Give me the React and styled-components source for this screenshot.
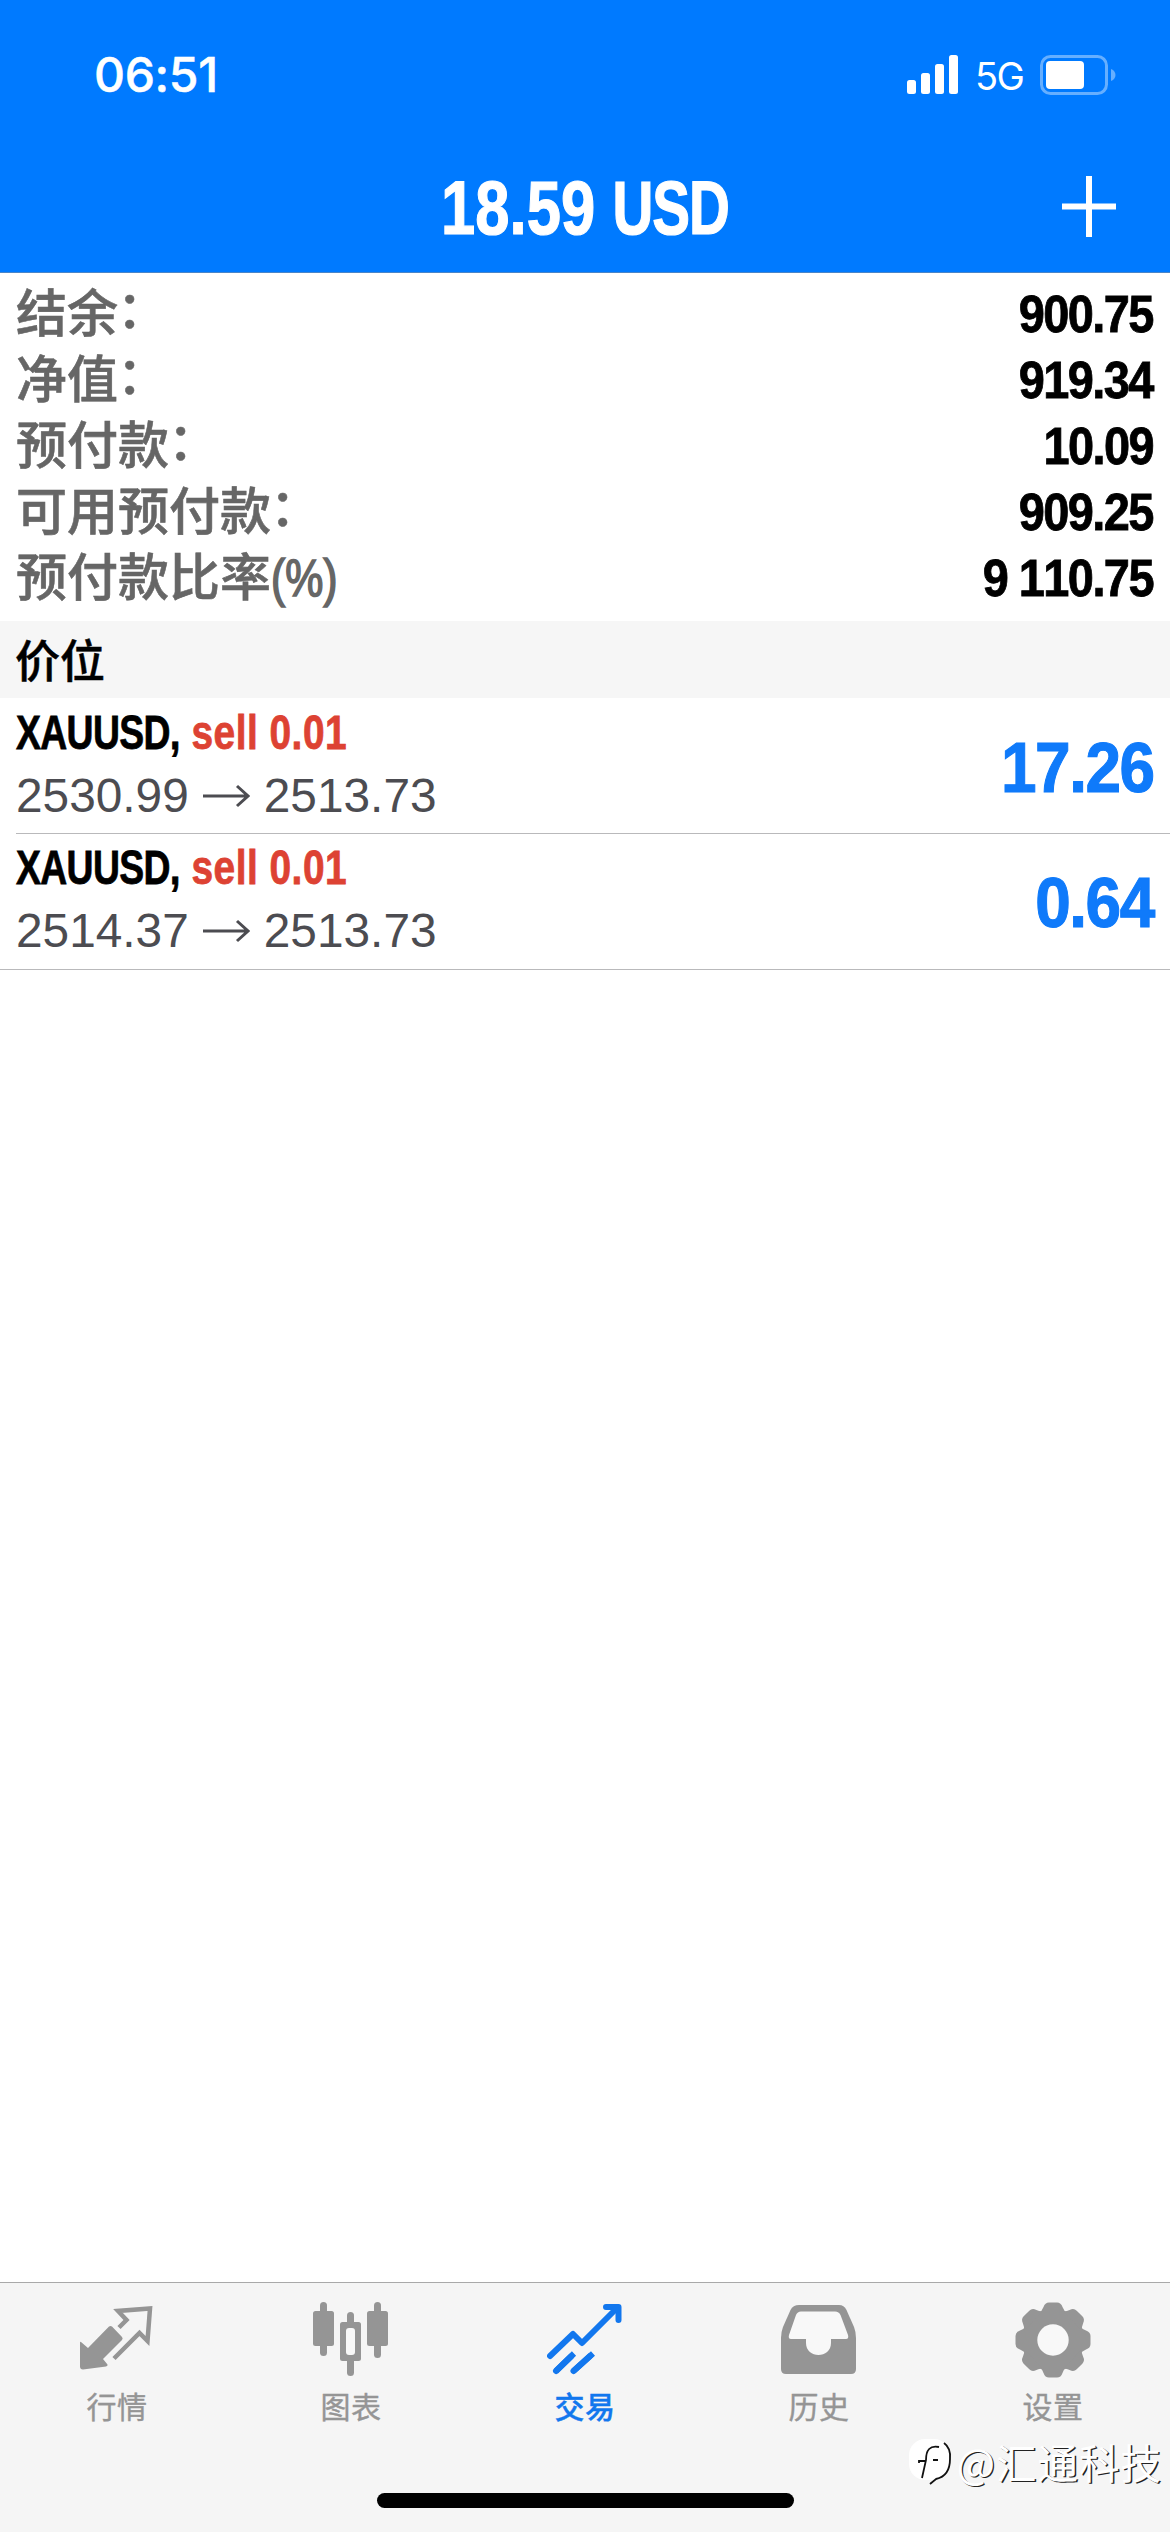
import React from 'react';
import styled, { createGlobalStyle } from 'styled-components';

const GlobalStyle = createGlobalStyle`
    * {
        box-sizing: border-box;
    }
    body {
        margin: 0;
        background: #ffffff;
        font-family: "Liberation Sans", "Noto Sans CJK SC", sans-serif;
    }
`;

const Screen = styled.div`
    position: relative;
    width: 1170px;
    height: 2532px;
    display: flex;
    flex-direction: column;
    overflow: hidden;
    background: #ffffff;
`;

const Header = styled.header`
    height: 273px;
    background: #007aff;
    border-bottom: 1px solid #4a85c8;
    color: #ffffff;
`;

const StatusBar = styled.div`
    height: 140px;
    padding: 25px 54px 15px 94px;
    display: flex;
    align-items: center;
    justify-content: space-between;
`;

const Time = styled.div`
    font: 500 48px/60px Inter, sans-serif;
    letter-spacing: -0.3px;
    -webkit-text-stroke: 0.5px currentColor;
`;

const StatusIcons = styled.div`
    display: flex;
    align-items: center;
`;

const Network = styled.span`
    width: 49px;
    margin: 2px 16px 0 16px;
    font: 400 38px/48px Inter, sans-serif;
    letter-spacing: -1.5px;
    white-space: nowrap;
`;

const TitleBar = styled.div`
    height: 132px;
    padding: 0 54px;
    display: grid;
    grid-template-columns: 54px 1fr 54px;
    align-items: center;
`;

// Bold text squeezed to condensed proportions
const Condensed = styled.span`
    display: block;
    font-weight: 700;
    font-size: ${p => p.$size}px;
    font-kerning: none;
    line-height: ${p => p.$line}px;
    letter-spacing: ${p => p.$spacing || 0}px;
    color: ${p => p.$color || '#000000'};
    transform: scaleX(${p => p.$scale});
    transform-origin: ${p => p.$origin || 'right'} center;
    -webkit-text-stroke: 0.016em currentColor;
    white-space: nowrap;
`;

const Title = styled(Condensed)`
    grid-column: 2;
    text-align: center;
    padding-top: 3px;
`;

// Capitals are narrower than the digits beside them
const Caps = styled.span`
    display: inline-block;
    margin-right: -${p => p.$pull}px;
    letter-spacing: ${p => p.$spacing}px;
    transform: scaleX(${p => p.$scale});
    transform-origin: left center;
`;

const Summary = styled.section`
    height: 348px;
    padding: 9px 17px 0 16px;
`;

const SummaryRow = styled.div`
    height: 66px;
    display: flex;
    align-items: center;
    justify-content: space-between;
`;

const Label = styled.span`
    font-size: 51px;
    font-weight: 500;
    line-height: 66px;
    color: #666666;
    -webkit-text-stroke: 0.6px currentColor;
    white-space: nowrap;
`;

const Colon = styled.span`
    position: relative;
    top: -4px;
    left: -1px;
`;

const Unit = styled.span`
    display: inline-block;
    transform: scaleX(0.84);
    transform-origin: left center;
    -webkit-text-stroke: 1.6px currentColor;
`;

const SectionTitle = styled.h2`
    height: 77px;
    margin: 0;
    padding-left: 15px;
    background: #f6f6f6;
    font: 500 45px/75px "Noto Sans CJK SC", sans-serif;
    color: #000000;
    -webkit-text-stroke: 0.5px currentColor;
`;

const Positions = styled.section`
    flex: 1;
`;

const PositionRow = styled.div`
    height: 136px;
    margin-left: ${p => (p.$last ? 0 : 16)}px;
    padding: ${p => (p.$last ? 7 : 8)}px 16px 0 ${p => (p.$last ? 16 : 0)}px;
    display: flex;
    justify-content: space-between;
    border-bottom: 1px solid #b9b9bb;
`;

const Side = styled.b`
    color: #dd4233;
    letter-spacing: 0.6px;
`;

const Prices = styled.div`
    display: flex;
    align-items: center;
    font-size: 47.8px;
    line-height: 56px;
    padding-top: 8px;
    color: #4c4c51;
`;

const Arrow = styled.svg`
    margin: 0 14px 0 13px;
`;

const Profit = styled.div`
    padding-top: 22px;
`;

const TabBar = styled.nav`
    height: 250px;
    display: flex;
    flex-direction: column;
    justify-content: space-between;
    align-items: center;
    padding-bottom: 24px;
    background: #f5f5f5;
    border-top: 1px solid #a9a9a9;
`;

const Tabs = styled.div`
    width: 100%;
    display: grid;
    grid-template-columns: repeat(5, 1fr);
`;

const Tab = styled.div`
    display: flex;
    flex-direction: column;
    align-items: center;
    padding-top: 19px;
    color: ${p => (p.$active ? '#1277ee' : '#959595')};
`;

const TabLabel = styled.span`
    margin-top: 5px;
    font: ${p => (p.$active ? 500 : 400)} 30px/44px "Noto Sans CJK SC", sans-serif;
    letter-spacing: 0.6px;
    -webkit-text-stroke: 0.4px currentColor;
`;

const HomeIndicator = styled.div`
    width: 417px;
    height: 15px;
    border-radius: 8px;
    background: #000000;
`;

const Watermark = styled.div`
    position: absolute;
    right: 8px;
    bottom: 42px;
    display: flex;
    align-items: center;
    gap: 4px;
    font: 400 40.5px/56px "Noto Sans CJK SC", sans-serif;
    letter-spacing: 1px;
    color: #ffffff;
    text-shadow: 1.4px 1.4px 0 #222222;
    white-space: nowrap;
`;

const Signal = () => (
    <svg width="52" height="40" viewBox="0 0 52 40" fill="currentColor">
        <rect x="0" y="25" width="9" height="14" rx="2.5" />
        <rect x="14" y="18" width="9" height="21" rx="2.5" />
        <rect x="28" y="9" width="9" height="30" rx="2.5" />
        <rect x="42" y="0" width="9" height="39" rx="2.5" />
    </svg>
);

const Battery = () => (
    <svg width="76" height="40" viewBox="0 0 76 40">
        <rect x="1.5" y="1.5" width="65" height="37" rx="9" fill="none" stroke="#66afff" strokeWidth="3" />
        <rect x="6" y="6" width="38" height="28" rx="4" fill="#ffffff" />
        <path d="M71 14 C77 16 77 24 71 26 Z" fill="#66afff" />
    </svg>
);

const Plus = () => (
    <svg width="54" height="61" viewBox="0 0 54 61" fill="none" stroke="#ffffff" strokeWidth="6">
        <path d="M27 0 V61 M0 30.5 H54" />
    </svg>
);

const QuotesIcon = () => (
    <svg width="74" height="76" viewBox="0 0 74 76">
        <path
            d="M1 40 L8 46 L29 24.5 Q30.500 23.500 32 24.500 L42 35 Q43.300 36.600 42 38 L23 57 L27.500 62.500 Q28 64 26 64.500 L3 67.500 Q0 67.500 0 64.500 V41 Q0 39 1 40 Z"
            fill="currentColor"
        />
        <path
            d="M39 25.500 L46.500 18 L38 9 L70 6.500 L67.500 39 L59.500 31 L34 56.500"
            fill="none"
            stroke="currentColor"
            strokeWidth="4.500"
        />
    </svg>
);

const ChartIcon = () => (
    <svg width="76" height="76" viewBox="0 0 76 76" fill="currentColor">
        <rect x="0" y="9" width="21" height="35" rx="2.5" />
        <rect x="7" y="0" width="7" height="54" rx="3.5" />
        <rect x="54" y="9" width="21" height="35" rx="2.5" />
        <rect x="61" y="0" width="7" height="56" rx="3.5" />
        <rect x="34" y="10" width="7" height="18" rx="3.5" />
        <rect x="34" y="50" width="7" height="24" rx="3.5" />
        <rect x="27" y="20" width="21" height="39" rx="2.5" />
        <rect x="33" y="26" width="9" height="27" rx="3" fill="#f8f8f8" />
    </svg>
);

const TradeIcon = () => (
    <svg
        width="76"
        height="76"
        viewBox="0 0 76 76"
        fill="none"
        stroke="currentColor"
        strokeWidth="6"
        strokeLinecap="round"
        strokeLinejoin="round"
    >
        <path d="M3 54 L26 32 L35 41 L70 6" />
        <path d="M59 5 H71.500 V18" />
        <path d="M9 69 L27 51.500 M26.500 69 L46 51.500" strokeLinecap="butt" />
        <path d="M9 69 L24 54.500 M26.500 69 L43 54" />
    </svg>
);

const HistoryIcon = () => (
    <svg width="76" height="76" viewBox="0 0 76 76">
        <path
            d="M18 3 H58 Q63 3 65.500 8 L73 25 Q75 30 75 36 V67 Q75 72 70 72 H5 Q0 72 0 67 V36 Q0 30 2 25 L9.500 8 Q12 3 18 3 Z"
            fill="currentColor"
        />
        <path
            d="M20 9.500 H54 Q58 9.500 59.500 13 L67 33 Q68 37 65 37 H50 V41 C50 57 25 57 25 41 V37 H10 Q7 37 8 33 L15 13 Q16.500 9.500 20 9.500 Z"
            fill="#f8f8f8"
        />
    </svg>
);

const SettingsIcon = () => (
    <svg width="76" height="76" viewBox="0 0 76 76">
        <g fill="currentColor">
            <circle cx="38" cy="38" r="30.5" />
            {[0, 45, 90, 135, 180, 225, 270, 315].map(angle => (
                <path
                    key={angle}
                    d="M24 11 Q27 9 28.500 5 Q30 0.500 34 0.500 H42 Q46 0.500 47.500 5 Q49 9 52 11 Z"
                    transform={`rotate(${angle} 38 38)`}
                />
            ))}
        </g>
        <circle cx="38" cy="38" r="15.7" fill="#f8f8f8" />
    </svg>
);

const WatermarkLogo = () => (
    <svg width="44" height="48" viewBox="0 0 44 48" fill="none">
        <rect x="0" y="1" width="41" height="41" rx="16" fill="#ffffff" />
        <path d="M35 5 Q42 10 41 21 Q41 38 27 41 L21 46" stroke="#111111" strokeWidth="1.8" />
        <path d="M30 9 C21 7 17 12 17 22 L13 40 M10 25 V23 H17 M24 22 H29" stroke="#111111" strokeWidth="1.8" />
    </svg>
);

const summary = [
    { label: '结余', end: <Colon>：</Colon>, value: '900.75' },
    { label: '净值', end: <Colon>：</Colon>, value: '919.34' },
    { label: '预付款', end: <Colon>：</Colon>, value: '10.09' },
    { label: '可用预付款', end: <Colon>：</Colon>, value: '909.25' },
    { label: '预付款比率', end: <Unit>(%)</Unit>, value: '9 110.75' },
];

const positions = [
    { symbol: 'XAUUSD', side: 'sell 0.01', open: '2530.99', current: '2513.73', profit: '17.26' },
    { symbol: 'XAUUSD', side: 'sell 0.01', open: '2514.37', current: '2513.73', profit: '0.64' },
];

const tabs = [
    { label: '行情', icon: <QuotesIcon /> },
    { label: '图表', icon: <ChartIcon /> },
    { label: '交易', icon: <TradeIcon />, active: true },
    { label: '历史', icon: <HistoryIcon /> },
    { label: '设置', icon: <SettingsIcon /> },
];

const Position = ({ item, last }) => (
    <PositionRow $last={last}>
        <div>
            <Condensed $size={48} $line={54} $scale={0.81} $origin="left">
                <Caps $scale={0.96} $spacing={-0.8} $pull={8}>
                    {item.symbol}
                </Caps>
                , <Side>{item.side}</Side>
            </Condensed>
            <Prices>
                {item.open}
                <Arrow width="48" height="24" viewBox="0 0 48 24" fill="none" stroke="currentColor" strokeWidth="3">
                    <path d="M1 12 H46 M35 2 L46 12 L35 22" />
                </Arrow>
                {item.current}
            </Prices>
        </div>
        <Profit>
            <Condensed $size={71} $line={80} $scale={0.9} $spacing={-1.6} $color="#0f7afa">
                {item.profit}
            </Condensed>
        </Profit>
    </PositionRow>
);

const App = () => {
    return (
        <Screen>
            <GlobalStyle />
            <Header>
                <StatusBar>
                    <Time>06:51</Time>
                    <StatusIcons>
                        <Signal />
                        <Network>5G</Network>
                        <Battery />
                    </StatusIcons>
                </StatusBar>
                <TitleBar>
                    <Title $size={76} $line={86} $scale={0.81} $color="#ffffff" $origin="center">
                        18.59{' '}
                        <Caps $scale={0.92} $spacing={-1.5} $pull={12}>
                            USD
                        </Caps>
                    </Title>
                    <Plus />
                </TitleBar>
            </Header>
            <Summary>
                {summary.map(row => (
                    <SummaryRow key={row.label + row.value}>
                        <Label>
                            {row.label}
                            {row.end}
                        </Label>
                        <Condensed $size={51} $line={66} $scale={0.92} $spacing={-1.7}>
                            {row.value}
                        </Condensed>
                    </SummaryRow>
                ))}
            </Summary>
            <SectionTitle>价位</SectionTitle>
            <Positions>
                {positions.map((item, i) => (
                    <Position key={item.open} item={item} last={i === positions.length - 1} />
                ))}
            </Positions>
            <TabBar>
                <Tabs>
                    {tabs.map(tab => (
                        <Tab key={tab.label} $active={tab.active}>
                            {tab.icon}
                            <TabLabel $active={tab.active}>{tab.label}</TabLabel>
                        </Tab>
                    ))}
                </Tabs>
                <HomeIndicator />
            </TabBar>
            <Watermark>
                <WatermarkLogo />
                @汇通科技
            </Watermark>
        </Screen>
    );
};

export default App;
